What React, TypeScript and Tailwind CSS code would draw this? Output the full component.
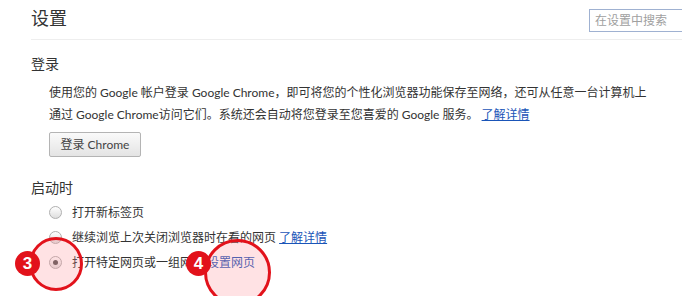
import React from "react";

const font = "font-['Lato','Noto_Sans_CJK_SC',sans-serif]";

function Radio({ checked }: { checked?: boolean }) {
  return (
    <span className="flex h-[13px] w-[13px] shrink-0 items-center justify-center rounded-full border border-[#b0b0b0] bg-gradient-to-b from-[#ffffff] to-[#dedede]">
      {checked && <span className="h-[5px] w-[5px] rounded-full bg-[#555]" />}
    </span>
  );
}

function Badge({ n, className }: { n: string; className: string }) {
  return (
    <div
      className={`absolute flex h-[25px] w-[25px] items-center justify-center rounded-full bg-[#e2121b] text-[17px] font-bold leading-none text-white font-['Liberation_Sans',sans-serif] ${className}`}
    >
      {n}
    </div>
  );
}

export default function App() {
  return (
    <div className={`relative h-[296px] w-full overflow-hidden bg-white text-[#333] ${font}`}>
      <div className="pl-[31px]">
        <header className="-mr-[20px] flex h-[40px] items-start border-b border-[#eee] pt-[6px]">
          <h1 className="flex-1 text-[18px] leading-[24px] text-[#333]">设置</h1>
          <div className="mt-[3px] flex h-[23px] w-[113px] shrink-0 items-center border border-[#9fb1d1] pl-[5px] text-[12px] text-[#a0a0a0]">
            在设置中搜索
          </div>
        </header>

        <section className="mt-[14px]">
          <h2 className="text-[14px] leading-[20px]">登录</h2>
          <div className="pl-[18px]">
            <p className="mt-[8px] text-[12px] leading-[22px]">
              使用您的 Google 帐户登录 Google Chrome，即可将您的个性化浏览器功能保存至网络，还可从任意一台计算机上
              <br />
              通过 Google Chrome访问它们。系统还会自动将您登录至您喜爱的 Google 服务。{" "}
              <a className="text-[#1a55b8] underline">了解详情</a>
            </p>
            <button className="mt-[6px] h-[25px] w-[92px] rounded-[2px] border border-[#b4b4b4] bg-gradient-to-b from-[#fafafa] to-[#e4e4e4] text-[12px] text-[#444]">
              登录 Chrome
            </button>
          </div>
        </section>

        <section className="mt-[21px]">
          <h2 className="text-[14px] leading-[20px]">启动时</h2>
          <div className="mt-[2px] pl-[18px] text-[12px]">
            <div className="flex h-[25px] items-center">
              <Radio />
              <span className="ml-[10px]">打开新标签页</span>
            </div>
            <div className="flex h-[25px] items-center">
              <Radio />
              <span className="ml-[10px]">
                继续浏览上次关闭浏览器时在看的网页{" "}
                <a className="text-[#1a55b8] underline">了解详情</a>
              </span>
            </div>
            <div className="flex h-[25px] items-center">
              <Radio checked />
              <span className="ml-[10px]">
                打开特定网页或一组网页 <a className="text-[#1a55b8]">设置网页</a>
              </span>
            </div>
          </div>
        </section>
      </div>

      {/* annotation markers */}
      <div className="absolute left-[29px] top-[237px] h-[54px] w-[54px] rounded-full border-[3px] border-[#e2121b] bg-[#ff8c95]/25" />
      <div className="absolute left-[204px] top-[239px] h-[67px] w-[67px] rounded-full border-[3px] border-[#e2121b] bg-[#ff8c95]/25" />
      <Badge n="3" className="left-[15px] top-[251px]" />
      <Badge n="4" className="left-[186px] top-[251px]" />
    </div>
  );
}
